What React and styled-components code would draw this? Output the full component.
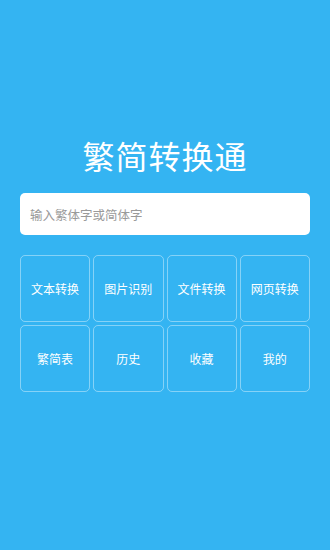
import React from "react";
import styled, { createGlobalStyle } from "styled-components";

const Global = createGlobalStyle`
  html, body { margin: 0; padding: 0; }
  body {
    background: #34b4f2;
    font-family: "Noto Sans CJK SC", "Noto Sans", sans-serif;
  }
`;

const Page = styled.div`
  width: 330px;
  height: 550px;
  background: #34b4f2;
  box-sizing: border-box;
  padding: 132px 20px 0;
  display: flex;
  flex-direction: column;
`;

const Title = styled.h1`
  margin: 0;
  text-align: center;
  color: #fff;
  font-size: 32px;
  font-weight: 400;
  line-height: 46px;
  letter-spacing: 1px;
`;

const SearchBox = styled.div`
  margin-top: 15px;
  height: 42px;
  background: #fff;
  border-radius: 5px;
  display: flex;
  align-items: center;
  padding: 0 10px;
  color: #9a9a9a;
  font-size: 12.5px;
`;

const Grid = styled.div`
  margin-top: 20px;
  display: grid;
  grid-template-columns: repeat(4, 1fr);
  grid-auto-rows: 67px;
  gap: 3px;
`;

const Cell = styled.div`
  border: 1px solid rgba(255, 255, 255, 0.4);
  border-radius: 5px;
  display: flex;
  align-items: center;
  justify-content: center;
  color: #fff;
  font-size: 12px;
`;

const items = ["文本转换", "图片识别", "文件转换", "网页转换", "繁简表", "历史", "收藏", "我的"];

export default function App() {
  return (
    <>
      <Global />
      <Page>
        <Title>繁简转换通</Title>
        <SearchBox>输入繁体字或简体字</SearchBox>
        <Grid>
          {items.map((t) => (
            <Cell key={t}>{t}</Cell>
          ))}
        </Grid>
      </Page>
    </>
  );
}
